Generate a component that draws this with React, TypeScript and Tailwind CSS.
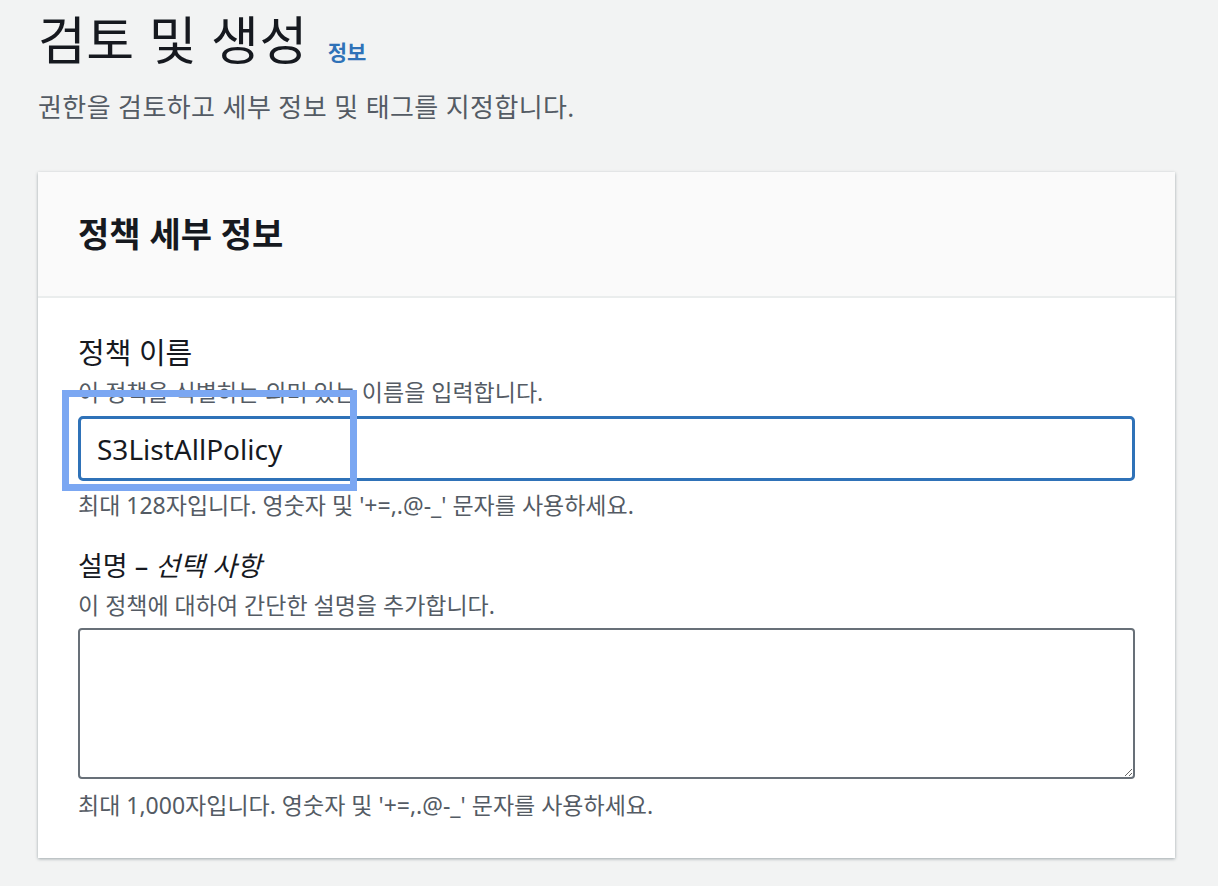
export default function App() {
  const font = { fontFamily: '"Noto Sans", "Noto Sans CJK KR", sans-serif' }
  return (
    <div className="min-h-[886px] bg-[#f2f3f3] text-[#16191f]" style={font}>
      <div className="pl-[38px] pr-[43px] pt-[6px]">
        <div className="flex items-baseline gap-[20px]">
          <h1 className="text-[52px] leading-[68px] font-normal tracking-[0.5px]">검토 및 생성</h1>
          <a className="text-[21px] font-bold text-[#2f72b8]">정보</a>
        </div>
        <p className="mt-[15px] text-[26px] leading-[36px] tracking-[0.4px] text-[#545b64]">
          권한을 검토하고 세부 정보 및 태그를 지정합니다.
        </p>

        <section className="mt-[47px] bg-white shadow-[0_1px_3px_rgba(0,28,36,0.35)]">
          <div className="h-[126px] flex items-center px-[40px] bg-[#fafafa] border-b-2 border-[#eaeded]">
            <h2 className="text-[34px] font-bold">정책 세부 정보</h2>
          </div>

          <div className="px-[40px] pt-[34px] pb-[35px]">
            <div className="relative">
              <label className="block text-[29px] leading-[42px]">정책 이름</label>
              <p className="text-[23px] leading-[36px] text-[#545b64]">
                이 정책을 식별하는 의미 있는 이름을 입력합니다.
              </p>
              <div className="mt-[6px] h-[65px] rounded-[5px] border-[3px] border-[#2f72b8] flex items-center px-[16px]">
                <span className="text-[28px]">S3ListAllPolicy</span>
              </div>
              <p className="mt-[6px] text-[23px] leading-[36px] text-[#545b64]">
                최대 128자입니다. 영숫자 및 '+=,.@-_' 문자를 사용하세요.
              </p>
              <div className="absolute left-[-16px] top-[58px] w-[295px] h-[101px] border-[7px] border-[#7ba7f2]" />
            </div>

            <div className="mt-[22px]">
              <label className="block text-[27px] leading-[42px]">
                설명 – <i>선택 사항</i>
              </label>
              <p className="text-[23px] leading-[36px] text-[#545b64]">
                이 정책에 대하여 간단한 설명을 추가합니다.
              </p>
              <textarea
                className="mt-[5px] block w-full h-[151px] rounded-[4px] border-2 border-[#687078] bg-white"
                readOnly
              />
              <p className="mt-[8px] text-[23px] leading-[36px] text-[#545b64]">
                최대 1,000자입니다. 영숫자 및 '+=,.@-_' 문자를 사용하세요.
              </p>
            </div>
          </div>
        </section>
      </div>
    </div>
  )
}
